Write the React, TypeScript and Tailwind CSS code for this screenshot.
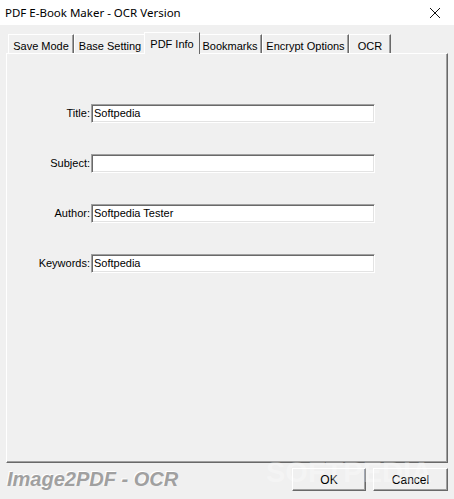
import React from "react";

const tabs = [
  { label: "Save Mode", w: "w-[66px]" },
  { label: "Base Setting", w: "w-[72px]" },
  { label: "PDF Info", w: "w-[56px]", active: true },
  { label: "Bookmarks", w: "w-[64px]" },
  { label: "Encrypt Options", w: "w-[87px]" },
  { label: "OCR", w: "w-[42px]" },
];

const fields = [
  { label: "Title:", value: "Softpedia" },
  { label: "Subject:", value: "" },
  { label: "Author:", value: "Softpedia Tester" },
  { label: "Keywords:", value: "Softpedia" },
];

function Tab({ label, w, active }: { label: string; w: string; active?: boolean }) {
  if (active) {
    return (
      <div
        className={`${w} -mx-[2px] relative z-10 -mb-px flex h-[22px] items-start justify-center whitespace-nowrap border-l border-t border-r border-l-white border-t-white border-r-[#696969] bg-[#f0f0f0] pt-[3px] text-[11px] text-black`}
      >
        {label}
      </div>
    );
  }
  return (
    <div
      className={`${w} flex h-[19px] items-start justify-center whitespace-nowrap border-l border-t border-r border-l-white border-t-white border-r-[#696969] pt-[3px] text-[11px] text-black shadow-[inset_-1px_0_0_#a0a0a0]`}
    >
      {label}
    </div>
  );
}

export default function App() {
  return (
    <div
      className="relative flex h-[499px] w-[454px] flex-col overflow-hidden bg-[#f0f0f0]"
      style={{ fontFamily: '"Liberation Sans", Arial, sans-serif' }}
    >
      <div className="flex h-[25px] items-center justify-between bg-white pl-[5px] pr-[9px]">
        <span className="text-[11.5px] text-black" style={{ fontFamily: '"Noto Sans", "Open Sans", sans-serif' }}>
          PDF E-Book Maker - OCR Version
        </span>
        <svg width="12" height="12" viewBox="0 0 12 12" className="mr-[4px]">
          <path d="M1 1 L11 11 M11 1 L1 11" stroke="#111" strokeWidth="1" />
        </svg>
      </div>

      <div className="ml-[6px] mt-[7px] w-[442px]">
        <div className="flex items-end pl-[2px]">
          {tabs.map((t) => (
            <Tab key={t.label} label={t.label} w={t.w} active={t.active} />
          ))}
        </div>
        <div className="h-[410px] border border-l-white border-t-white border-r-[#696969] border-b-[#696969] shadow-[inset_-1px_-1px_0_#a0a0a0]">
          <div className="mt-[50px] flex flex-col gap-[31px]">
            {fields.map((f) => (
              <div key={f.label} className="flex items-center">
                <span className="w-[84px] pr-[1px] text-right text-[11px] text-black">{f.label}</span>
                <div className="flex h-[19px] w-[284px] items-center border border-l-[#a0a0a0] border-t-[#a0a0a0] border-r-white border-b-white bg-white pl-[2px] text-[11px] text-black shadow-[inset_1px_1px_0_#696969,inset_-1px_-1px_0_#e3e3e3]">
                  {f.value}
                </div>
              </div>
            ))}
          </div>
        </div>
      </div>

      <div className="mt-[5px] flex items-center justify-between pl-[7px] pr-[6px]">
        <span
          className="text-[20px] font-bold italic leading-[23px] text-[#a0a0a0]"
          style={{ textShadow: "-1px -1px 0 #ffffff" }}
        >
          Image2PDF - OCR
        </span>
        <div className="flex gap-[7px]">
          <button className="h-[23px] w-[74px] border border-l-white border-t-white border-r-[#696969] border-b-[#696969] bg-[#f0f0f0] text-[12px] text-black shadow-[inset_-1px_-1px_0_#a0a0a0]">
            OK
          </button>
          <button className="h-[23px] w-[75px] border border-l-white border-t-white border-r-[#696969] border-b-[#696969] bg-[#f0f0f0] text-[12px] text-black shadow-[inset_-1px_-1px_0_#a0a0a0]">
            Cancel
          </button>
        </div>
      </div>

      <div className="pointer-events-none absolute left-[266px] top-[456px] text-[29px] font-bold leading-[32px] text-white/30">
        SOFTPEDIA
      </div>
    </div>
  );
}
